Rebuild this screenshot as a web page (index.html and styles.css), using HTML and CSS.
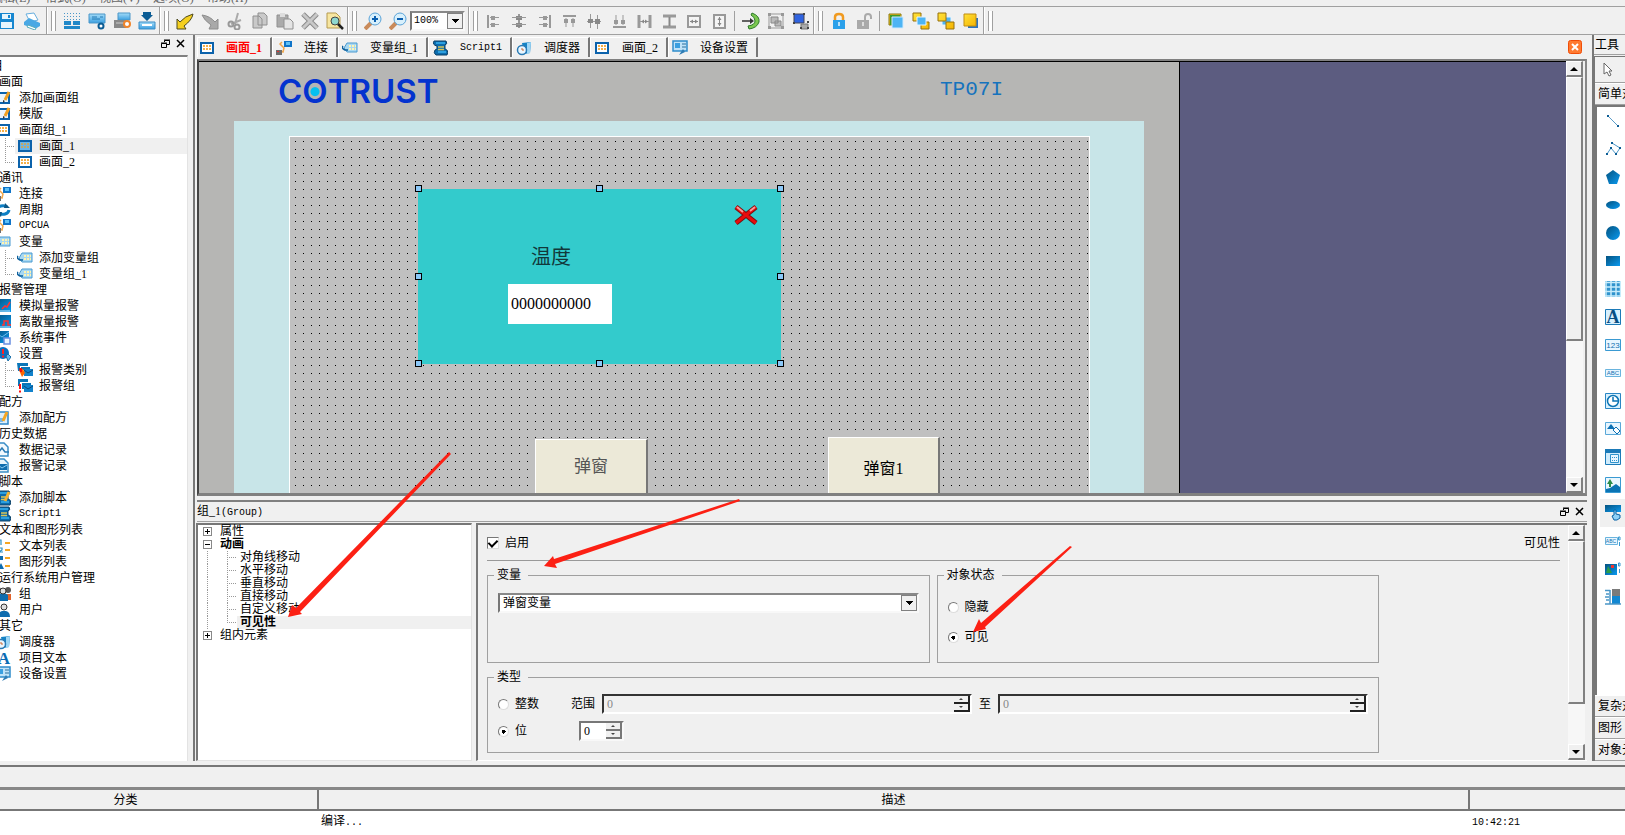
FILE: index.html
```
<!DOCTYPE html>
<html lang="zh-CN">
<head>
<meta charset="utf-8">
<title>画面_1</title>
<link rel="stylesheet" href="styles.css">
</head>
<body>
<svg class="defs" aria-hidden="true">
<defs>
<linearGradient id="gb" x1="0" y1="0" x2="1" y2="1"><stop offset="0" stop-color="#04527f"/><stop offset="1" stop-color="#0a9af0"/></linearGradient>
<linearGradient id="gl" x1="0" y1="0" x2="0" y2="1"><stop offset="0" stop-color="#a5dcf8"/><stop offset="1" stop-color="#3a9fe0"/></linearGradient>
<linearGradient id="gy" x1="0" y1="0" x2="1" y2="1"><stop offset="0" stop-color="#ffe23a"/><stop offset="1" stop-color="#f5b400"/></linearGradient>
</defs>
<symbol id="screen" viewBox="0 0 16 16"><path fill="#0b62ab" d="M1 2h14v12H1z"/><path fill="#fff" d="M3 4h10v8H3z"/><path stroke="#f5b04a" stroke-width="2" stroke-dasharray="2 1" d="M4 6h8M4 9h8"/></symbol>
<symbol id="screenon" viewBox="0 0 16 16"><path fill="#0b62ab" d="M1 2h14v12H1z"/><path fill="#69b4e8" d="M3 4h10v8H3z"/><path stroke="#c3a768" stroke-width="2" stroke-dasharray="2 1" d="M4 6h8M4 9h8"/></symbol>
<symbol id="edit" viewBox="0 0 16 16"><path fill="#e8f4fd" stroke="#0b62ab" stroke-width="2" d="M1 3h13v10H1z"/><path stroke="#f0a020" stroke-width="3" d="M14 2 10 10"/><path fill="#333" d="m8 10 2 1-2 2z"/></symbol>
<symbol id="conn" viewBox="0 0 16 16"><path fill="#0f74c8" d="M8 1h8v6H8z"/><path fill="#5fc0f5" d="M10 2h4v3h-4z"/><path fill="none" stroke="#f0a64a" stroke-width="1.500" d="M6 2 4 4l4 4-1 4-3-1"/><path fill="#6c6c6c" d="M0 10h6v5H0z"/><path fill="#d33" d="M1 11h2v1H1z"/></symbol>
<symbol id="cycle" viewBox="0 0 16 16"><path fill="none" stroke="#0d7fc4" stroke-width="3" d="M2 8a6 5 0 0 1 10-3M14 8a6 5 0 0 1-10 3"/><path fill="#0b5686" d="m10 1 5 5h-6zM6 15 1 10h6z"/></symbol>
<symbol id="tag" viewBox="0 0 16 16"><path fill="#a8d8f2" stroke="#4a9ad0" d="M5 3h10v9H5L2 8z"/><path stroke="#fff3b0" stroke-width="2" stroke-dasharray="2 1" d="M7 6h7M7 9h7"/><path fill="none" stroke="#0c5f9c" stroke-width="1.500" d="M1 6q-2 2 2 4h3"/></symbol>
<symbol id="analog" viewBox="0 0 16 16"><path fill="url(#gb)" d="M0 1h16v13H0z"/><path fill="none" stroke="#f33" stroke-width="1.500" d="m7 11 3-3 2 1 3-5"/><path stroke="#bfe3f7" d="M2 13h13"/></symbol>
<symbol id="digital" viewBox="0 0 16 16"><path fill="url(#gb)" d="M0 1h16v13H0z"/><path fill="none" stroke="#f33" stroke-width="1.500" d="M7 11h2V7h4v4h3"/><path stroke="#bfe3f7" d="M2 13h13"/></symbol>
<symbol id="event" viewBox="0 0 16 16"><path fill="url(#gb)" d="M0 1h14v12H0z"/><path fill="none" stroke="#6cbcec" d="m0 2 7 5 7-5"/><path fill="#eaf5ff" stroke="#6a8fe0" stroke-width="1.500" d="M9 8h6v6H9z"/></symbol>
<symbol id="setting" viewBox="0 0 16 16"><circle cx="8" cy="7" r="6" fill="#0a6fc0"/><path stroke="#f22" stroke-width="2" d="M8 3v5M8 9.500v2"/><path fill="#6ab9ea" stroke="#1a6ea8" d="m11 10 2-2 3 3-3 4z"/></symbol>
<symbol id="cat" viewBox="0 0 16 16"><path fill="#0b76b8" d="M0 1h11v3H3v5H1zM4 5h9v3H6v3H4z"/><path fill="#1182cc" d="M7 7h9v7H7z"/><path stroke="#0a4c7c" fill="none" d="m7 8 4 3 5-3"/><path fill="#f60" d="m2 8 4-1 2 4-3 4z"/><path fill="#e11" d="M2 6h3v4H3z"/></symbol>
<symbol id="agroup" viewBox="0 0 16 16"><path fill="#0b76b8" d="M1 1h10v3H3v4H1zM5 5h9v3H7v3H5z"/><path fill="#1182cc" d="M7 7h9v7H7z"/><path stroke="#0a4c7c" fill="none" d="m7 8 4 3 5-3"/><path stroke="#f11" stroke-width="2" d="M3 6v5M3 12.500v2"/></symbol>
<symbol id="recipe" viewBox="0 0 16 16"><path fill="#dceefb" stroke="#2f86c8" stroke-width="1.500" d="M1 2h12v12H1z"/><path fill="#79b8e8" d="M3 8h5v4H3z"/><path stroke="#f5a623" stroke-width="3" d="m12 2-4 9"/></symbol>
<symbol id="datalog" viewBox="0 0 16 16"><path fill="#f2f9fe" stroke="#3a8dc6" stroke-width="1.500" d="M1 1h8l4 4v9H1z"/><path fill="none" stroke="#2a7ab4" stroke-width="1.500" d="m3 11 4-5 3 4h4"/></symbol>
<symbol id="alarmlog" viewBox="0 0 16 16"><path fill="#e8f4fc" stroke="#3a8dc6" stroke-width="1.500" d="M1 1h8l4 4v9H1z"/><path fill="#0f6cae" d="M3 6h9v6H3z"/><path fill="none" stroke="#8ccbf0" d="m3 7 4 3 5-3"/></symbol>
<symbol id="script" viewBox="0 0 16 16"><path fill="#0b6cae" stroke="#0a3f66" d="M2 1h12q2 3-1 4v4q4 1 2 6H4q-3-2-1-5l2-1V6Q0 5 2 1z"/><path stroke="#38b0f0" stroke-width="1.500" d="M4 3h9M6 12h8"/><path stroke="#d8c45a" stroke-width="1.500" d="M6 7h6M6 9.500h6"/></symbol>
<symbol id="scriptadd" viewBox="0 0 16 16"><use href="#script"/><path stroke="#f5b230" stroke-width="3" d="m14 2-4 9"/></symbol>
<symbol id="textlist" viewBox="0 0 16 16"><path fill="none" stroke="#2d8fc4" stroke-width="1.200" d="M4 2h2v5M4 10h3v2l-3 2h4"/><path stroke="#f5a623" stroke-width="2" d="M10 5h5M10 12h5"/></symbol>
<symbol id="graphlist" viewBox="0 0 16 16"><path fill="#0d6cb0" d="M4 2h4v4H4zM6 9l3 6H3z"/><path stroke="#f5a623" stroke-width="2" d="M10 4h5M10 12h5"/></symbol>
<symbol id="users" viewBox="0 0 16 16"><path fill="#4ba046" d="M0 8h5v6H0z"/><path fill="#e2622a" d="M11 8h5v6h-5z"/><path fill="#0f6cae" d="M3 9q5-4 10 0v6H3z"/><circle cx="3" cy="4" r="3" fill="#555"/><circle cx="13" cy="4" r="3" fill="#555"/><circle cx="8" cy="5" r="3" fill="#ddd" stroke="#333"/></symbol>
<symbol id="user" viewBox="0 0 16 16"><path fill="#0f6cae" d="M3 15q0-5 4-6h4q4 1 4 6z"/><circle cx="9" cy="5" r="3" fill="#ddd" stroke="#333"/></symbol>
<symbol id="sched" viewBox="0 0 16 16"><path fill="#1583c6" d="m6 3 9-1-1 11-6 1z"/><path fill="#9ed6f5" d="m11 3 4-1-1 11-3 1z"/><circle cx="6" cy="10" r="4.500" fill="#e8f6ff" stroke="#2a7ab4" stroke-width="1.500"/><path fill="none" stroke="#c63" d="M6 8v2h2"/></symbol>
<symbol id="device" viewBox="0 0 16 16"><path fill="#bfe2f8" stroke="#2f8cca" stroke-width="1.500" d="M1 1h14v10H1z"/><path fill="#3a9fe0" d="M3 3h5v5H3z"/><path stroke="#2a6f9c" d="M10 4h4M10 7h4"/><path fill="#2f7cb4" d="m7 15 4-6 2 3z"/></symbol>

<symbol id="t-save" viewBox="0 0 18 18"><path fill="#1787d0" d="M0 1h16v16H0z"/><path fill="#e6f5fd" d="M4 2h9v5H4zM3 10h11v6H3z"/><path fill="#1787d0" d="M10 3h2v3h-2z"/></symbol>
<symbol id="t-print" viewBox="0 0 18 18"><path fill="#fff" stroke="#67aede" d="m3 2 8-1 4 7-8 2z"/><path fill="#4aa8e4" d="m1 10 5-4 11 5v3l-5 3L1 13z"/><path fill="#fff" stroke="#5ab" d="m5 13 8 3-1 2-8-3z"/></symbol>
<symbol id="t-grid" viewBox="0 0 18 18"><path stroke="#4a96c8" stroke-dasharray="1 2" d="M1 1.500h16M1 4.500h16M1 7.500h16"/><path fill="#2188c8" d="M1 9h7v4H1zM10 9h7v4h-7zM1 14h16v3H1z"/></symbol>
<symbol id="t-build" viewBox="0 0 18 18"><path fill="url(#gl)" stroke="#4a96c8" d="M1 2h16v9H1z"/><path stroke="#247ab4" d="M4 5h5M4 7h8M12 5h3"/><circle cx="13" cy="14" r="2.500" fill="#fff" stroke="#0b5c94" stroke-width="2"/></symbol>
<symbol id="t-run" viewBox="0 0 18 18"><path fill="url(#gl)" stroke="#4a96c8" d="M5 1h12v7H5z"/><path fill="#888" d="M1 8h12v8H1z"/><path stroke="#ccc" d="M3 11h8"/><circle cx="14" cy="12" r="3" fill="#fff" stroke="#f0842a" stroke-width="2"/></symbol>
<symbol id="t-down" viewBox="0 0 18 18"><path fill="#0b5c94" d="M5 0h8v3h2L9 9 3 3h2z"/><path fill="url(#gl)" stroke="#3a8dc6" d="M1 10h16v7H1z"/><path fill="#fff" d="M4 12h10v2H4z"/></symbol>
<symbol id="t-undo" viewBox="0 0 18 18"><path fill="#f5d020" stroke="#4d4a20" d="M1 17V7l3 3q5-6 13-8-1 6-9 12l2 3z"/></symbol>
<symbol id="t-redo" viewBox="0 0 18 18"><path fill="#a9a9a9" stroke="#8d8d8d" d="M17 17V7l-3 3Q9 4 1 3q2 5 9 10l-2 4z"/></symbol>
<symbol id="t-cut" viewBox="0 0 18 18"><path fill="none" stroke="#aaa" stroke-width="2" d="m12 1-3 11M15 8 5 12"/><circle cx="5" cy="12" r="2.500" fill="none" stroke="#999" stroke-width="2"/><circle cx="11" cy="15" r="2.500" fill="none" stroke="#999" stroke-width="2"/></symbol>
<symbol id="t-copy" viewBox="0 0 18 18"><path fill="#c9c9c9" stroke="#909090" d="M7 1h6l3 3v9H7zM2 4h6l3 3v9H2z"/></symbol>
<symbol id="t-paste" viewBox="0 0 18 18"><path fill="#aaa" stroke="#909090" d="M1 3h11v12H1z"/><path fill="#ddd" d="M4 1h5v4H4z"/><path fill="#e4e4e4" stroke="#909090" d="M8 7h6l3 3v7H8z"/></symbol>
<symbol id="t-del" viewBox="0 0 18 18"><path stroke="#8a8a8a" stroke-width="5" d="m2 2 14 14M16 2 2 16"/><path stroke="#c8c8c8" stroke-width="3" d="m2 2 14 14M16 2 2 16"/></symbol>
<symbol id="t-find" viewBox="0 0 18 18"><path fill="#f7e6a0" stroke="#b59a50" d="M1 1h9l4 4v11H1z"/><circle cx="9" cy="9" r="4" fill="#8fd8cf" stroke="#444"/><path stroke="#222" stroke-width="2.500" d="m12 12 5 5"/></symbol>
<symbol id="t-zin" viewBox="0 0 18 18"><path stroke="#c98a5a" stroke-width="4" d="m7 11-6 6"/><circle cx="11" cy="7" r="6" fill="#d8f0fc" stroke="#5aa3d8"/><path stroke="#0b5fb0" stroke-width="2" d="M8 7h6M11 4v6"/></symbol>
<symbol id="t-zout" viewBox="0 0 18 18"><path stroke="#c98a5a" stroke-width="4" d="m7 11-6 6"/><circle cx="11" cy="7" r="6" fill="#d8f0fc" stroke="#5aa3d8"/><path stroke="#0b5fb0" stroke-width="2" d="M8 7h6"/></symbol>
<symbol id="t-al" viewBox="0 0 18 18"><path stroke="#999" stroke-width="2" d="M3 3v13"/><path fill="#999" d="M6 4h4v4H6zM6 11h4v4H6z"/><path stroke="#999" d="M5 5.500h9M5 12.500h9"/></symbol>
<symbol id="t-ac" viewBox="0 0 18 18"><path stroke="#999" stroke-width="2" d="M9 2v14"/><path fill="#888" d="M6 4h6v4H6zM6 11h6v4H6z"/><path stroke="#999" d="M2 5.500h14M2 12.500h14"/></symbol>
<symbol id="t-ar" viewBox="0 0 18 18"><path stroke="#999" stroke-width="2" d="M15 3v13"/><path fill="#999" d="M8 4h4v4H8zM8 11h4v4H8z"/><path stroke="#999" d="M4 5.500h9M4 12.500h9"/></symbol>
<symbol id="t-at" viewBox="0 0 18 18"><path stroke="#999" stroke-width="2" d="M3 4h13"/><path fill="#999" d="M4 7h4v4H4zM11 7h4v4h-4z"/><path stroke="#999" d="M6 6v9M13 6v9"/></symbol>
<symbol id="t-am" viewBox="0 0 18 18"><path stroke="#999" d="M2 9.500h14M5.500 2v14M12.500 3v14"/><path fill="#888" d="M3 7h5v4H3zM10 7h5v5h-5z"/></symbol>
<symbol id="t-ab" viewBox="0 0 18 18"><path stroke="#999" stroke-width="2" d="M3 15h13"/><path fill="#999" d="M4 8h4v4H4zM11 8h4v4h-4z"/><path stroke="#999" d="M6 3v10M13 3v10"/></symbol>
<symbol id="t-sh" viewBox="0 0 18 18"><path stroke="#999" stroke-width="3" d="M4 3v13M15 3v13"/><path stroke="#999" d="M5 9.500h9"/><path fill="#888" d="m6 9.500 3-2v4zM13 9.500l-3-2v4z"/></symbol>
<symbol id="t-sv" viewBox="0 0 18 18"><path stroke="#999" stroke-width="3" d="M3 4h13M3 15h13"/><path stroke="#888" stroke-width="2" d="M9.500 5v9"/></symbol>
<symbol id="t-sw" viewBox="0 0 18 18"><path fill="#f4f4f4" stroke="#999" stroke-width="2" d="M3 4h12v11H3z"/><path stroke="#888" d="M5 9.500h8"/><path fill="#888" d="m5 9.500 3-2v4zM13 9.500l-3-2v4z"/></symbol>
<symbol id="t-se" viewBox="0 0 18 18"><path fill="#f4f4f4" stroke="#999" stroke-width="2" d="M4 3h11v13H4z"/><path stroke="#888" d="M9.500 5v9"/><path fill="#888" d="m9.500 5-2 3h4zM9.500 14l-2-3h4z"/></symbol>
<symbol id="t-rot" viewBox="0 0 18 18"><path fill="#7cc850" stroke="#2d7a2a" d="M10 1q8 3 7 9-2 6-10 7l-1-3q7-1 7-5 0-4-4-6z"/><path stroke="#333" stroke-width="1.500" d="M0 9h10"/><path fill="#333" d="m8 6 4 3-4 3z"/></symbol>
<symbol id="t-grp" viewBox="0 0 18 18"><path fill="none" stroke="#999" d="M2 2h14v14H2z"/><path fill="#999" d="M1 1h3v3H1zM14 1h3v3h-3zM1 14h3v3H1zM14 14h3v3h-3z"/><path fill="#bbb" stroke="#888" d="M4 5h7v6H4zM8 9h6v5H8z"/></symbol>
<symbol id="t-ungrp" viewBox="0 0 18 18"><path fill="#2f63e0" stroke="#445" d="M2 2h10v9H2z"/><path fill="#aaa" stroke="#777" d="M9 12h7v5H9z"/><path fill="#444" d="M1 1h2v2H1zM11 1h2v2h-2zM1 10h2v2H1zM15 9h2v2h-2zM15 15h2v2h-2zM8 15h2v2H8z"/></symbol>
<symbol id="t-lock" viewBox="0 0 18 18"><path fill="none" stroke="#f09a20" stroke-width="2.500" d="M5 9V5q0-3 4-3t4 3v4"/><path fill="#2aa0ea" d="M3 8h12v9H3z"/><path stroke="#e8f7ff" stroke-width="1.500" d="M9 10v4"/></symbol>
<symbol id="t-unlock" viewBox="0 0 18 18"><path fill="none" stroke="#aaa" stroke-width="2" d="M10 9V5q0-3 3-3t3 3v2"/><path fill="#a9a9a9" d="M2 8h12v9H2z"/><path stroke="#eee" stroke-width="1.500" d="M8 10v4"/></symbol>
<symbol id="t-z1" viewBox="0 0 18 18"><path fill="#f0c020" stroke="#8a7a10" d="M2 2h12v11H2z"/><path fill="#3f9a2a" d="M3 3h10v10H3z"/><path fill="#4db4f4" stroke="#cfeaff" d="M5 5h11v11H5z"/></symbol>
<symbol id="t-z2" viewBox="0 0 18 18"><path fill="url(#gy)" stroke="#96700c" d="M1 1h8v8H1zM9 10h8v7H9z"/><path fill="#4db4f4" stroke="#e5f4ff" d="M5 5h9v8H5z"/></symbol>
<symbol id="t-z3" viewBox="0 0 18 18"><path fill="#4db4f4" stroke="#e5f4ff" d="M5 5h9v8H5z"/><path fill="url(#gy)" stroke="#96700c" d="M1 1h8v8H1zM9 10h8v7H9z"/></symbol>
<symbol id="t-z4" viewBox="0 0 18 18"><path fill="#2b72c0" d="M6 6h10v10H6z"/><path fill="url(#gy)" stroke="#c18d10" d="M2 2h12v12H2z"/></symbol>

<symbol id="ptr" viewBox="0 0 16 16"><path fill="#fff" stroke="#666" d="M3 1v11l3-2 2 4 2-1-2-4h3z"/></symbol>
<symbol id="b-line" viewBox="0 0 16 16"><path stroke="#5a9cc8" d="m3 3 10 10"/><path fill="#0b5c94" d="M2 2h2v2H2zM12 12h2v2h-2z"/></symbol>
<symbol id="b-poly" viewBox="0 0 16 16"><path fill="none" stroke="#4a96c8" d="m2 13 4-6 5 6 4-6-8-5"/><path fill="#0b5c94" d="M1 12h2v2H1zM5 6h2v2H5zM10 12h2v2h-2zM14 6h2v2h-2zM6 1h2v2H6z"/></symbol>
<symbol id="b-pent" viewBox="0 0 16 16"><path fill="url(#gb)" d="m8 1 7 5-3 9H4L1 6z"/></symbol>
<symbol id="b-ell" viewBox="0 0 16 16"><ellipse cx="8" cy="8" rx="7" ry="4" fill="url(#gb)"/></symbol>
<symbol id="b-circ" viewBox="0 0 16 16"><circle cx="8" cy="8" r="7" fill="url(#gb)"/></symbol>
<symbol id="b-rect" viewBox="0 0 16 16"><path fill="url(#gb)" d="M1 3h14v10H1z"/></symbol>
<symbol id="b-table" viewBox="0 0 16 16"><path fill="#2f93cc" d="M0 0h16v16H0z"/><path stroke="#c7ecfb" stroke-width="1.500" d="M0 1.500h16M0 6h16M0 10.500h16M0 15h16M1 0v16M6 0v16M11 0v16M15.500 0v16"/></symbol>
<symbol id="b-clock" viewBox="0 0 16 16"><path fill="#d8f0fd" stroke="#2a86c4" d="M.5.5h15v15H.5z"/><circle cx="8" cy="8" r="5.500" fill="#fff" stroke="#0b74b4" stroke-width="1.500"/><path fill="none" stroke="#0b74b4" stroke-width="1.500" d="M8 4v4h5"/></symbol>
<symbol id="b-obj" viewBox="0 0 16 16"><path fill="#e8f6ff" stroke="#5aa8d8" d="M.5 1.500h15v12H.5z"/><path fill="#0b70b4" d="m2 8 4-5 4 5z"/><path fill="#fff" stroke="#0b70b4" d="m8 9 3-3 4 4-3 3z"/></symbol>
<symbol id="b-list" viewBox="0 0 16 16"><path fill="#d0ecfc" stroke="#1b7ab8" d="M.5.5h15v15H.5z"/><path fill="#1b7ab8" d="M0 0h16v4H0z"/><path fill="#e8f6ff" stroke="#2f93cc" d="M5.500 5.500h8v8h-8z"/><path stroke="#2f93cc" stroke-dasharray="1 1" d="M7 8.500h6M7 11.500h6"/></symbol>
<symbol id="b-pic" viewBox="0 0 16 16"><path fill="#eaf7ff" stroke="#3a9ad2" d="M.5.5h15v15H.5z"/><path fill="#0b74b4" d="M1 15v-3l4-1 6-4 4 3v5z"/><path fill="#2c8c4a" d="m5 2 3 5H6v3H4V7H2z"/></symbol>
<symbol id="b-btn" viewBox="0 0 16 16"><path fill="url(#gb)" d="M0 0h16v7H0z"/><path fill="#8fd0f6" stroke="#0b62a4" d="M9 5h2v4l4 1v3q-3 3-6 2l-2-4 2-1z"/></symbol>
<symbol id="b-pic2" viewBox="0 0 16 16"><path fill="url(#gb)" d="M0 3h12v11H0z"/><path fill="#2c9c4a" d="m1 12 2-7 4 7z"/><path fill="#e33" d="M6 4h3v3H6z"/><path fill="none" stroke="#3a9ad2" d="M13.500 2h1.500v3h-1.500zM14.500 8v4"/></symbol>
<symbol id="b-bar" viewBox="0 0 16 16"><path fill="#7b7b7b" d="M7 0h8v8H7z"/><path fill="#1287d2" d="M7 7h8v8H7z"/><path fill="none" stroke="#4a96c8" stroke-width="1.500" d="M5 1v14M0 1.500h5M1 5h3M0 8h4M1 11h3M0 15h16"/></symbol>
</svg>

<nav class="menu"><span>编辑(E)</span><span>格式(O)</span><span>视图(V)</span><span>选项(O)</span><span>帮助(H)</span></nav>

<header class="toolbar">
<div class="tg first"><button aria-label="保存"><svg><use href="#t-save"/></svg></button><button aria-label="打印"><svg><use href="#t-print"/></svg></button></div>
<div class="tg"><i class="grip"></i><button aria-label="网格"><svg><use href="#t-grid"/></svg></button><button aria-label="编译"><svg><use href="#t-build"/></svg></button><button aria-label="运行"><svg><use href="#t-run"/></svg></button><button aria-label="下载"><svg><use href="#t-down"/></svg></button></div>
<div class="tg"><i class="grip"></i><button aria-label="撤销"><svg><use href="#t-undo"/></svg></button><button aria-label="重做"><svg><use href="#t-redo"/></svg></button><button aria-label="剪切"><svg><use href="#t-cut"/></svg></button><button aria-label="复制"><svg><use href="#t-copy"/></svg></button><button aria-label="粘贴"><svg><use href="#t-paste"/></svg></button><button aria-label="删除"><svg><use href="#t-del"/></svg></button><button aria-label="查找"><svg><use href="#t-find"/></svg></button></div>
<div class="tg"><i class="grip"></i><button aria-label="放大"><svg><use href="#t-zin"/></svg></button><button aria-label="缩小"><svg><use href="#t-zout"/></svg></button><select class="combo zoomsel" aria-label="缩放"><option>100%</option></select></div>
<div class="tg"><i class="grip"></i><button aria-label="左对齐"><svg><use href="#t-al"/></svg></button><button aria-label="水平居中"><svg><use href="#t-ac"/></svg></button><button aria-label="右对齐"><svg><use href="#t-ar"/></svg></button><button aria-label="顶对齐"><svg><use href="#t-at"/></svg></button><button aria-label="垂直居中"><svg><use href="#t-am"/></svg></button><button aria-label="底对齐"><svg><use href="#t-ab"/></svg></button><button aria-label="水平等距"><svg><use href="#t-sh"/></svg></button><button aria-label="垂直等距"><svg><use href="#t-sv"/></svg></button><button aria-label="等宽"><svg><use href="#t-sw"/></svg></button><button aria-label="等高"><svg><use href="#t-se"/></svg></button><i class="vsep"></i><button aria-label="旋转"><svg><use href="#t-rot"/></svg></button><button aria-label="组合"><svg><use href="#t-grp"/></svg></button><button aria-label="取消组合"><svg><use href="#t-ungrp"/></svg></button></div>
<div class="tg"><i class="grip"></i><button aria-label="锁定"><svg><use href="#t-lock"/></svg></button><button aria-label="解锁"><svg><use href="#t-unlock"/></svg></button><i class="vsep"></i><button aria-label="置于顶层"><svg><use href="#t-z1"/></svg></button><button aria-label="上移"><svg><use href="#t-z2"/></svg></button><button aria-label="下移"><svg><use href="#t-z3"/></svg></button><button aria-label="置于底层"><svg><use href="#t-z4"/></svg></button></div>
<div class="tg last"><i class="grip"></i></div>
</header>

<main class="work">
<aside class="project">
<div class="dockhead"><button class="dockbtn" aria-label="浮动"><svg viewBox="0 0 9 9"><path fill="none" stroke="#000" d="M3.500 3V1.500h5v4H6M.5 4.500h5v4h-5zM3 1h6M0 4h6"/></svg></button><button class="dockbtn" aria-label="关闭"><svg viewBox="0 0 9 9"><path stroke="#000" stroke-width="1.500" d="m1 1 7 7M8 1 1 8"/></svg></button></div>
<ul class="ptree">
<li class="l1 cut">项目</li>
<li class="l1">画面</li>
<li class="l2"><svg><use href="#edit"/></svg>添加画面组</li>
<li class="l2"><svg><use href="#edit"/></svg>模版</li>
<li class="l2"><svg><use href="#screen"/></svg>画面组_1</li>
<li class="l3"><span class="on"><svg><use href="#screenon"/></svg>画面_1</span></li>
<li class="l3 end"><span><svg><use href="#screen"/></svg>画面_2</span></li>
<li class="l1">通讯</li>
<li class="l2"><svg><use href="#conn"/></svg>连接</li>
<li class="l2"><svg><use href="#cycle"/></svg>周期</li>
<li class="l2"><svg><use href="#conn"/></svg><b class="lat">OPCUA</b></li>
<li class="l2"><svg><use href="#tag"/></svg>变量</li>
<li class="l3"><span><svg><use href="#tag"/></svg>添加变量组</span></li>
<li class="l3 end"><span><svg><use href="#tag"/></svg>变量组_1</span></li>
<li class="l1">报警管理</li>
<li class="l2"><svg><use href="#analog"/></svg>模拟量报警</li>
<li class="l2"><svg><use href="#digital"/></svg>离散量报警</li>
<li class="l2"><svg><use href="#event"/></svg>系统事件</li>
<li class="l2"><svg><use href="#setting"/></svg>设置</li>
<li class="l3"><span><svg><use href="#cat"/></svg>报警类别</span></li>
<li class="l3 end"><span><svg><use href="#agroup"/></svg>报警组</span></li>
<li class="l1">配方</li>
<li class="l2"><svg><use href="#recipe"/></svg>添加配方</li>
<li class="l1">历史数据</li>
<li class="l2"><svg><use href="#datalog"/></svg>数据记录</li>
<li class="l2"><svg><use href="#alarmlog"/></svg>报警记录</li>
<li class="l1">脚本</li>
<li class="l2"><svg><use href="#scriptadd"/></svg>添加脚本</li>
<li class="l2"><svg><use href="#script"/></svg><b class="lat">Script1</b></li>
<li class="l1">文本和图形列表</li>
<li class="l2"><svg><use href="#textlist"/></svg>文本列表</li>
<li class="l2"><svg><use href="#graphlist"/></svg>图形列表</li>
<li class="l1">运行系统用户管理</li>
<li class="l2"><svg><use href="#users"/></svg>组</li>
<li class="l2"><svg><use href="#user"/></svg>用户</li>
<li class="l1">其它</li>
<li class="l2"><svg><use href="#sched"/></svg>调度器</li>
<li class="l2"><svg viewBox="0 0 16 16"><text x="9" y="14" text-anchor="middle" font-family="Liberation Serif" font-weight="bold" font-size="17" fill="#0b6cb4">A</text></svg>项目文本</li>
<li class="l2"><svg><use href="#device"/></svg>设备设置</li>
</ul>
</aside>

<section class="center">
<div class="tabs">
<button class="tab active"><svg><use href="#screen"/></svg>画面_1</button>
<button class="tab"><svg><use href="#conn"/></svg>连接</button>
<button class="tab"><svg><use href="#tag"/></svg>变量组_1</button>
<button class="tab"><svg><use href="#script"/></svg><b class="lat">Script1</b></button>
<button class="tab"><svg><use href="#sched"/></svg>调度器</button>
<button class="tab"><svg><use href="#screen"/></svg>画面_2</button>
<button class="tab"><svg><use href="#device"/></svg>设备设置</button>
<button class="closetab" aria-label="关闭标签"><svg viewBox="0 0 14 14"><rect x=".5" y=".5" width="13" height="13" rx="2" fill="#ff7a30" stroke="#f04d08"/><path stroke="#fff" stroke-width="2" d="m4 4 6 6M10 4l-6 6"/></svg></button>
</div>

<div class="editor">
<div class="stage">
<div class="hmi">
<div class="logo">C<span>O</span>TRUST</div>
<div class="model">TP07I</div>
<div class="glass"></div>
<div class="screenarea">
<div class="popup">
<span class="ptitle">温度</span>
<input class="pval" aria-label="温度" value="0000000000">
<button class="px" aria-label="关闭弹窗"><svg viewBox="0 0 26 22"><path stroke="#7a1010" stroke-width="5" d="m3 3 20 16M23 3 3 19"/><path stroke="#e80c0c" stroke-width="3" d="m3 3 20 16M23 3 3 19"/><path stroke="#f79a9a" stroke-width="2" d="m4 3 6 5M22 3l-5 4"/></svg></button>
<i class="h nw"></i><i class="h n"></i><i class="h ne"></i><i class="h w"></i><i class="h e"></i><i class="h sw"></i><i class="h s"></i><i class="h se"></i>
</div>
<button class="hbtn one">弹窗</button>
<button class="hbtn two">弹窗1</button>
</div>
</div>
</div>
<div class="vbar"><button aria-label="上"><i class="up"></i></button><div class="thumb main"></div><div class="rest"></div><button aria-label="下"><i class="down"></i></button></div>
</div>

<section class="props">
<div class="dockhead low"><h2>组_1<b class="lat">(Group)</b></h2><button class="dockbtn" aria-label="浮动"><svg viewBox="0 0 9 9"><path fill="none" stroke="#000" d="M3.500 3V1.500h5v4H6M.5 4.500h5v4h-5zM3 1h6M0 4h6"/></svg></button><button class="dockbtn" aria-label="关闭"><svg viewBox="0 0 9 9"><path stroke="#000" stroke-width="1.500" d="m1 1 7 7M8 1 1 8"/></svg></button></div>
<div class="pbody">
<ul class="atree">
<li><i class="exp plus"></i>属性</li>
<li class="bold"><i class="exp"></i>动画</li>
<li class="sub"><span>对角线移动</span></li>
<li class="sub"><span>水平移动</span></li>
<li class="sub"><span>垂直移动</span></li>
<li class="sub"><span>直接移动</span></li>
<li class="sub"><span>自定义移动</span></li>
<li class="sub end bold"><span class="on">可见性</span></li>
<li><i class="exp plus"></i>组内元素</li>
</ul>
<form class="pform">
<div class="fields">
<div class="enable"><label><input type="checkbox" checked>启用</label><span>可见性</span></div>
<div class="grid">
<fieldset class="tall"><legend>变量</legend><select class="combo var" aria-label="变量"><option>弹窗变量</option></select></fieldset>
<fieldset class="tall state"><legend>对象状态</legend><label><input type="radio" name="st">隐藏</label><label><input type="radio" name="st" checked>可见</label></fieldset>
<fieldset class="wide"><legend>类型</legend>
<div class="frow"><label class="kind"><input type="radio" name="ty">整数</label><label for="from">范围</label><div class="spin off"><input id="from" value="0" disabled><span><button type="button" aria-label="增加" disabled></button><button type="button" aria-label="减少" disabled></button></span></div><label for="to">至</label><div class="spin off"><input id="to" value="0" disabled><span><button type="button" aria-label="增加" disabled></button><button type="button" aria-label="减少" disabled></button></span></div></div>
<div class="frow"><label class="kind bit"><input type="radio" name="ty" checked>位</label><div class="spin small"><input value="0" aria-label="位号"><span><button type="button" aria-label="增加"></button><button type="button" aria-label="减少"></button></span></div></div>
</fieldset>
</div>
</div>
<div class="vbar"><button type="button" aria-label="上"><i class="up"></i></button><div class="thumb low"></div><div class="rest"></div><button type="button" aria-label="下"><i class="down"></i></button></div>
</form>
</div>
</section>
</section>

<aside class="tools">
<h2>工具</h2>
<div class="toolbox">
<button class="pointer" aria-label="选择"><svg><use href="#ptr"/></svg></button>
<button class="cat">简单对象</button>
<div class="items">
<button aria-label="线"><svg><use href="#b-line"/></svg></button><button aria-label="折线"><svg><use href="#b-poly"/></svg></button><button aria-label="多边形"><svg><use href="#b-pent"/></svg></button><button aria-label="椭圆"><svg><use href="#b-ell"/></svg></button><button aria-label="圆"><svg><use href="#b-circ"/></svg></button><button aria-label="矩形"><svg><use href="#b-rect"/></svg></button><button aria-label="表格"><svg><use href="#b-table"/></svg></button>
<button aria-label="文本域"><svg viewBox="0 0 16 16"><path fill="#d8f0fd" stroke="#1b7ab8" d="M.5.5h15v15H.5z"/><text x="8" y="14" text-anchor="middle" font-family="Liberation Serif" font-weight="bold" font-size="18" fill="#064f84">A</text></svg></button>
<button aria-label="数值域"><svg viewBox="0 0 16 16"><path fill="#e8f6ff" stroke="#3a9ad2" d="M.5 2.500h15v11H.5z"/><text x="8" y="11" text-anchor="middle" font-family="Liberation Sans" font-size="8" fill="#1070b0">123</text></svg></button>
<button aria-label="字符域"><svg viewBox="0 0 16 16"><path fill="#e8f6ff" stroke="#6ab4de" d="M.5 4.500h15v7H.5z"/><text x="8" y="10" text-anchor="middle" font-family="Liberation Sans" font-size="6" fill="#1070b0">ABC</text></svg></button>
<button aria-label="日期时间"><svg><use href="#b-clock"/></svg></button><button aria-label="图形域"><svg><use href="#b-obj"/></svg></button><button aria-label="列表"><svg><use href="#b-list"/></svg></button><button aria-label="图片"><svg><use href="#b-pic"/></svg></button><button class="hot" aria-label="按钮"><svg><use href="#b-btn"/></svg></button>
<button aria-label="文本开关"><svg viewBox="0 0 16 16"><path fill="#e8f6ff" stroke="#6ab4de" d="M.5 4.500h12v7H.5z"/><text x="6" y="10" text-anchor="middle" font-family="Liberation Sans" font-size="5" fill="#1070b0">ABC</text><path fill="none" stroke="#3a9ad2" d="M13.500 4h1.500v3h-1.500zM14.500 9v4"/></svg></button>
<button aria-label="图形开关"><svg><use href="#b-pic2"/></svg></button><button aria-label="棒图"><svg><use href="#b-bar"/></svg></button>
</div>
<button class="cat">复杂对象</button>
<button class="cat">图形</button>
<button class="cat">对象元素</button>
</div>
</aside>
</main>

<section class="output">
<div class="obar"></div>
<table>
<colgroup><col class="c1"><col><col class="c3"></colgroup>
<thead><tr><th class="sort">分类</th><th>描述</th><th></th></tr></thead>
<tbody><tr><td></td><td>编译<b class="lat">...</b></td><td><b class="lat">10:42:21</b></td></tr></tbody>
</table>
</section>

<svg class="marks" width="1625" height="835" viewBox="0 0 1625 835" aria-hidden="true"><g fill="#fc2014"><path d="M288 617 292 605 296 608 449 452 451 454 300 612 302 614z"/><path d="M544 566 553 556 554 559 739 499 740 501 555 564 557 568z"/><path d="M973 632 979 619 981 623 1070 546 1072 547 985 627 986 629z"/></g></svg>
</body>
</html>
```
FILE: styles.css
```
* { box-sizing: border-box; }
body {
  margin: 0;
  height: 100vh;
  display: flex;
  flex-direction: column;
  overflow: hidden;
  position: relative;
  background: #f0f0f0;
  color: #000;
  font: 12px/16px "Liberation Serif", "Noto Sans CJK SC", sans-serif;
}
button, input, select { font: inherit; color: inherit; padding: 0; margin: 0; border: 0; background: none; border-radius: 0; }
button { display: flex; align-items: center; justify-content: center; }
ul { list-style: none; margin: 0; padding: 0; }
h2 { margin: 0; font-size: 12px; font-weight: normal; }
svg { flex: none; }
.lat { font: 10px/16px "Liberation Mono", monospace; }
.defs { position: absolute; width: 0; height: 0; }
.marks { position: absolute; left: 0; top: 0; pointer-events: none; }

.menu { flex: none; height: 6px; display: flex; align-items: flex-end; overflow: hidden; margin-left: -9px; color: #666; }
.menu span { flex: none; width: 54px; }

.toolbar { flex: none; height: 29px; display: flex; border-top: 1px solid #a0a0a0; border-bottom: 1px solid #a0a0a0; }
.tg { display: flex; align-items: center; border-right: 1px solid #a0a0a0; border-left: 1px solid #fff; }
.tg.first { margin-left: -7px; padding-right: 2px; }
.tg.last { border-right: 0; }
.tg button { width: 25px; height: 26px; }
.tg svg { width: 18px; height: 18px; }
.grip { width: 5px; height: 20px; margin: 0 3px; border: solid #a0a0a0; border-width: 0 1px; background: #fff; }
.vsep { width: 1px; height: 20px; margin: 0 3px; background: #a0a0a0; }
.combo {
  appearance: none;
  border: 2px solid;
  border-color: #888 #f8f8f8 #f8f8f8 #777;
  background-color: #fff;
  background-image: linear-gradient(#000, #000), linear-gradient(#000, #000), linear-gradient(#000, #000), linear-gradient(#000, #000), linear-gradient(#f0f0f0, #f0f0f0), linear-gradient(#808080, #808080);
  background-repeat: no-repeat;
  background-size: 7px 1px, 5px 1px, 3px 1px, 1px 1px, 14px 14px, 16px 16px;
  background-position: right 4px top 6px, right 5px top 7px, right 6px top 8px, right 7px top 9px, right 1px top 1px, right 0 top 0;
}
.zoomsel { width: 55px; height: 20px; padding-left: 2px; margin-right: 3px; font: 10px "Liberation Mono", monospace; }

.work { flex: 1; min-height: 0; display: flex; padding-bottom: 4px; }
.project { flex: 0 0 188px; display: flex; flex-direction: column; }
.dockhead { flex: none; height: 20px; display: flex; align-items: center; justify-content: flex-end; gap: 6px; padding: 0 3px 4px 0; }
.dockbtn svg { width: 9px; height: 9px; }
.ptree { flex: 1; overflow: hidden; padding-top: 1px; background: #fff; border-top: 2px solid #808080; border-right: 1px solid #e3e3e3; }
.ptree li { height: 16px; display: flex; align-items: center; white-space: nowrap; margin-left: -5px; }
.ptree svg { width: 16px; height: 16px; }
.ptree .l1 { padding-left: 4px; }
.ptree .cut { padding-left: 0; margin-left: -21px; }
.ptree .l2 { gap: 8px; }
.ptree .l3::before { content: ""; flex: none; width: 10px; height: 16px; margin-left: 10px;
  background: repeating-linear-gradient(#999 0 1px, transparent 1px 2px) 0 0/1px 16px no-repeat, repeating-linear-gradient(90deg, #999 0 1px, transparent 1px 2px) 0 8px/10px 1px no-repeat; }
.ptree .end::before { background-size: 1px 8px, 10px 1px; }
.ptree span { flex: 1; display: flex; align-items: center; gap: 6px; padding-left: 2px; }
.on { background: #f0f0f0; }

.center { flex: 1; min-width: 0; display: flex; flex-direction: column; margin-left: 5px; border-left: 2px solid #777; padding: 0 5px 0 2px; }
.tabs { flex: none; height: 24px; display: flex; align-items: center; }
.tab { height: 20px; padding: 0 8px 0 3px; gap: 12px; border-right: 2px solid #777; border-left: 1px solid #fff; border-top: 1px solid #fff; }
.tab svg { width: 16px; height: 16px; }
.active { color: #f00; font-weight: bold; padding: 0 8px 0 1px; }
.tab.active { padding-left: 1px; gap: 11px; }
.closetab { margin: 0 5px 0 auto; }
.closetab svg { width: 14px; height: 14px; }

.editor { flex: 1; min-height: 0; display: flex; padding-right: 2px; border: 2px solid; border-color: #808080 #888 #808080 #444; border-bottom-width: 3px; }
.stage { flex: 1; min-width: 0; position: relative; overflow: hidden; background: #5c5c80; border-top: 1px solid #000; }
.hmi { position: absolute; left: 0; top: 0; width: 981px; height: 800px; background: #b6b6b4; border-right: 1px solid #000; }
.logo { position: absolute; left: 79px; top: 13px; display: flex; font: 600 33px/32px Inter, sans-serif; color: #0433cf; }
.logo span { background: radial-gradient(circle at 50% 52%, #06c0f0 0 4px, transparent 5px); }
.model { position: absolute; left: 741px; top: 15px; font: 21px/26px "Liberation Mono", monospace; color: #1673bd; }
.glass { position: absolute; left: 35px; top: 59px; width: 910px; height: 760px; background: #c8e5e8; }
.screenarea { position: absolute; left: 90px; top: 74px; width: 801px; height: 700px; border: 1px solid #fff; background: #c0c0c0; }
.screenarea::before { content: ""; position: absolute; inset: 4px 0 0 5px;
  background: linear-gradient(90deg, #c0c0c0 1px, transparent 1px) 1px 0/8px 8px, linear-gradient(90deg, #c0c0c0 6px, transparent 6px) 2px 0/8px 8px, repeating-linear-gradient(#000 0 1px, #c0c0c0 1px 8px); }
.popup { position: absolute; left: 128px; top: 52px; width: 363px; height: 175px; background: #33cbcc; }
.ptitle { position: absolute; left: 113px; top: 55px; font-size: 20px; line-height: 26px; color: #12383a; }
.pval { position: absolute; left: 90px; top: 95px; width: 104px; height: 40px; padding: 0 3px; background: #fff; font-size: 16px; }
.px { position: absolute; left: 315px; top: 15px; }
.px svg { width: 26px; height: 22px; }
.h { position: absolute; width: 7px; height: 7px; margin: -4px; border: 1px solid #000; background: #8cc8f8; }
.nw, .w, .sw { left: 1px; }
.n, .s { left: 50%; }
.ne, .e, .se { left: 100%; }
.nw, .n, .ne { top: 0; }
.w, .e { top: 50%; }
.sw, .s, .se { top: 100%; }
.hbtn { position: absolute; height: 64px; background: #ece9d8; border: solid; border-width: 1px 2px 1px 1px; border-color: #fff #777 #777 #fff; }
.one { left: 245px; top: 302px; width: 113px; font-size: 17px; color: #555; padding-bottom: 8px; }
.two { left: 538px; top: 300px; width: 112px; font-size: 16px; }

.vbar { flex: none; width: 17px; display: flex; flex-direction: column; }
.vbar button, .thumb { flex: none; background: #f0f0f0; border: 1px solid; border-color: #fff #808080 #808080 #fff; border-bottom-width: 2px; border-right-width: 2px; }
.vbar button { height: 16px; }
.rest { flex: 1; background: #f7f7f7; }
.thumb.main { height: 264px; }
.thumb.low { height: 163px; }
.up, .down { border: 4px solid transparent; }
.up { border-bottom-color: #000; border-top: 0; }
.down { border-top-color: #000; border-bottom: 0; }

.props { flex: none; margin-top: 4px; border-top: 2px solid #808080; }
.low.dockhead { padding: 0 3px 0 0; border-bottom: 1px solid #a0a0a0; }
.dockhead h2 { margin-right: auto; }
.pbody { display: flex; gap: 4px; margin-top: 1px; min-height: 238px; }
.atree { flex: 0 0 276px; margin-left: -1px; background: #fff; border: solid; border-width: 2px 1px 1px 2px; border-color: #777 #e3e3e3 #e3e3e3 #777; }
.atree li { height: 13px; line-height: 13px; display: flex; align-items: center; white-space: nowrap; padding-left: 5px; }
.exp { width: 9px; height: 9px; margin-right: 8px; border: 1px solid #888; background: linear-gradient(#000, #000) 1px 3px/5px 1px no-repeat; }
.exp.plus { background: linear-gradient(#000, #000) 1px 3px/5px 1px no-repeat, linear-gradient(#000, #000) 3px 1px/1px 5px no-repeat; }
.atree .sub { padding-left: 9px; background: repeating-linear-gradient(#999 0 1px, transparent 1px 2px) 9px 0/1px 13px no-repeat; }
.sub::before { content: ""; width: 10px; height: 13px; margin-left: 20px;
  background: repeating-linear-gradient(#999 0 1px, transparent 1px 2px) 0 0/1px 13px no-repeat, repeating-linear-gradient(90deg, #999 0 1px, transparent 1px 2px) 0 6px/10px 1px no-repeat; }
.sub.end::before { background-size: 1px 7px, 10px 1px; }
.sub span { flex: 1; padding-left: 3px; }
.bold { font-weight: bold; }
.pform { flex: 1; min-width: 0; display: flex; padding-right: 2px; border-left: 2px solid #777; border-top: 2px solid #777; border-bottom: 1px solid #fff; }
.fields { flex: 1; padding: 9px 8px 0 9px; }
.enable { display: flex; justify-content: space-between; height: 27px; padding-top: 1px; margin-bottom: 6px; border-bottom: 1px solid #999; }
.pform label { display: flex; align-items: center; height: 16px; }
input[type=checkbox], input[type=radio] { appearance: none; flex: none; width: 12px; height: 12px; background: #fff; border: 1px solid; border-color: #777 #ddd #ddd #777; }
input[type=checkbox] { margin-right: 6px; display: grid; place-items: center; }
input[type=checkbox]::before { content: ""; width: 4px; height: 7px; border: solid #000; border-width: 0 2px 2px 0; rotate: 45deg; margin-top: -2px; }
input[type=radio] { width: 11px; height: 11px; margin-right: 6px; border-radius: 50%; }
input[type=radio]:checked { background: radial-gradient(circle, #000 0 2px, #fff 2px); }
.grid { display: grid; grid-template-columns: 1fr 1fr; gap: 0 7px; max-width: 892px; }
fieldset { margin: 0; min-width: 0; padding: 0 10px; border: 1px solid #a0a0a0; }
legend { padding: 0 7px 0 3px; margin-left: -4px; line-height: 16px; }
.tall { height: 96px; margin-bottom: 6px; }
.wide { grid-column: 1 / -1; height: 84px; }
.var { display: block; width: 100%; height: 20px; margin-top: 10px; padding-left: 3px; line-height: 16px; }
.state label { margin-top: 14px; }
.state legend + label { margin-top: 16px; }
.frow { display: flex; align-items: center; height: 20px; margin-top: 9px; gap: 7px; }
.frow + .frow { margin-top: 7px; }
.frow label { flex: none; }
.kind { width: 66px; }
.bit { width: 74px; }
.spin { flex: 1; display: flex; height: 20px; background: #fff; border: 2px solid; border-color: #777 #f8f8f8 #f8f8f8 #777; }
.spin.off { background: #f0f0f0; border-color: #333 #fff #fff #333; }
.spin.small { flex: none; width: 45px; }
.spin input { flex: 1; min-width: 0; padding-left: 3px; background: none; }
.spin input:disabled { color: #888; }
.spin span { flex: none; width: 16px; display: flex; flex-direction: column; }
.spin button { flex: 1; background: #f0f0f0; border: solid #777; border-width: 0 2px 2px 0; }
.off button { border-color: #222; }
.spin button::before { content: ""; border: 2px solid transparent; border-bottom-color: #444; border-top: 0; }
.spin button + button::before { border: 2px solid transparent; border-top-color: #444; border-bottom: 0; }

.tools { flex: 0 0 33px; min-width: 0; display: flex; flex-direction: column; overflow: hidden; border-left: 2px solid #777; }
.tools h2 { flex: none; height: 20px; padding: 2px 0 0 1px; white-space: nowrap; border-bottom: 1px solid #a0a0a0; }
.toolbox { flex: 1; display: flex; flex-direction: column; border-left: 1px solid #777; margin-top: 1px; border-top: 1px solid #777; }
.pointer { height: 26px; padding-right: 2px; border-bottom: 1px solid #a0a0a0; }
.pointer svg { width: 16px; height: 16px; }
.toolbox .cat { flex: none; height: 22px; justify-content: flex-start; padding-left: 3px; white-space: nowrap; border-bottom: 1px solid #a0a0a0; border-top: 1px solid #fff; }
.items { flex: 1; background: #fff; border-left: 2px solid #777; border-top: 2px solid #777; }
.items button { width: 100%; height: 28px; padding-left: 3px; }
.items svg { width: 16px; height: 16px; }
.items .hot { background: #f0f0f0; background-clip: content-box; }

.output { flex: none; height: 70px; background: #fff; border-top: 2px solid #777; }
.obar { height: 20px; background: #f0f0f0; }
table { width: 100%; table-layout: fixed; border-collapse: separate; border-spacing: 0; border-top: 3px solid #888; }
.c1 { width: 319px; }
.c3 { width: 155px; }
th { height: 21px; padding: 0; font-weight: normal; background: #f0f0f0; border-right: 2px solid #777; border-bottom: 2px solid #777; }
th:last-child { border-right: 0; }
th.sort { padding-right: 66px; }
td { height: 20px; padding: 2px 0 0 2px; }
```
